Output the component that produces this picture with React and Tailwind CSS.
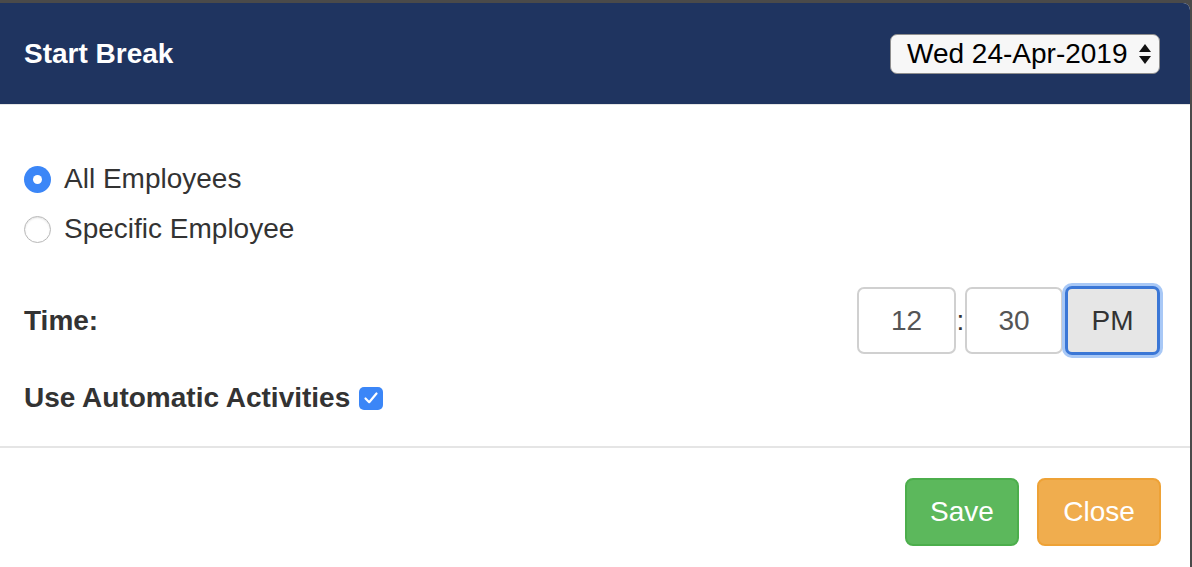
import React from "react";

export default function App() {
  return (
    <div
      className="w-[1192px] h-[567px] bg-[#4a4a4a] pt-[3px] pr-[2px] overflow-hidden"
      style={{ fontFamily: '"Liberation Sans", Arial, sans-serif' }}
    >
      <div className="w-[1190px] h-[564px] bg-white rounded-tr-[7px] overflow-hidden flex flex-col">
        {/* Header */}
        <div className="h-[102px] shrink-0 bg-[#1f3460] border-b border-[#e5e5e5] flex items-center justify-between pl-6 pr-[30px]">
          <div className="text-white font-bold text-[28px] leading-[40px]">Start Break</div>
          <div className="w-[270px] h-[40px] bg-[#f7f7f7] border border-[#8e8e8e] rounded-[7px] flex items-center justify-between pl-[16px] pr-[7px]">
            <span className="text-black text-[28px] leading-none">Wed 24-Apr-2019</span>
            <svg width="14" height="24" viewBox="0 0 14 24">
              <path d="M7 2 L13 10 L1 10 Z" fill="#111" />
              <path d="M1 14 L13 14 L7 22 Z" fill="#111" />
            </svg>
          </div>
        </div>

        {/* Body */}
        <div className="pl-6 pr-[30px] pt-[54px] pb-[28px] text-[#333]">
          <div className="h-[40px] flex items-center gap-[13px]">
            <div className="w-[27px] h-[27px] rounded-full bg-[#3b86f7] flex items-center justify-center">
              <div className="w-[9px] h-[9px] rounded-full bg-white" />
            </div>
            <span className="text-[28px] leading-[40px]">All Employees</span>
          </div>
          <div className="h-[40px] mt-[10px] flex items-center gap-[13px]">
            <div className="w-[27px] h-[27px] rounded-full bg-white border border-[#b8b8b8] shadow-[inset_0_1px_2px_rgba(0,0,0,0.12)]" />
            <span className="text-[28px] leading-[40px]">Specific Employee</span>
          </div>

          <div className="mt-[38px] h-[67px] flex items-center justify-between">
            <span className="font-bold text-[28px] leading-[40px]">Time:</span>
            <div className="flex items-center">
              <div className="w-[99px] h-[67px] border-2 border-[#d0d0d0] rounded-[7px] flex items-center justify-center text-[28px] text-[#555]">
                12
              </div>
              <span className="w-[9px] text-center text-[28px] text-[#333]">:</span>
              <div className="w-[98px] h-[67px] border-2 border-[#d0d0d0] rounded-[7px] flex items-center justify-center text-[28px] text-[#555]">
                30
              </div>
              <div className="ml-[2px] w-[95px] h-[69px] bg-[#e6e6e6] border-[3px] border-[#3b77d6] rounded-[7px] shadow-[0_0_0_3px_#a8c8f6] flex items-center justify-center text-[28px] text-[#333]">
                PM
              </div>
            </div>
          </div>

          <div className="mt-[24px] h-[40px] flex items-center gap-[9px]">
            <span className="font-bold text-[28px] leading-[40px]">Use Automatic Activities</span>
            <div className="w-[24px] h-[23px] rounded-[5px] bg-[#3b86f7] flex items-center justify-center">
              <svg width="16" height="14" viewBox="0 0 16 14">
                <path d="M2.5 7.5 L6.2 11.2 L13.5 2.5" stroke="white" strokeWidth="2.2" fill="none" strokeLinecap="round" strokeLinejoin="round" />
              </svg>
            </div>
          </div>
        </div>

        {/* Footer */}
        <div className="border-t-2 border-[#e5e5e5] pt-[30px] pr-[29px] flex justify-end gap-[18px]">
          <button className="w-[114px] h-[68px] bg-[#5cb85c] border-2 border-[#4cae4c] rounded-[8px] text-white text-[28px]">
            Save
          </button>
          <button className="w-[124px] h-[68px] bg-[#f0ad4e] border-2 border-[#eea236] rounded-[8px] text-white text-[28px]">
            Close
          </button>
        </div>
      </div>
    </div>
  );
}
